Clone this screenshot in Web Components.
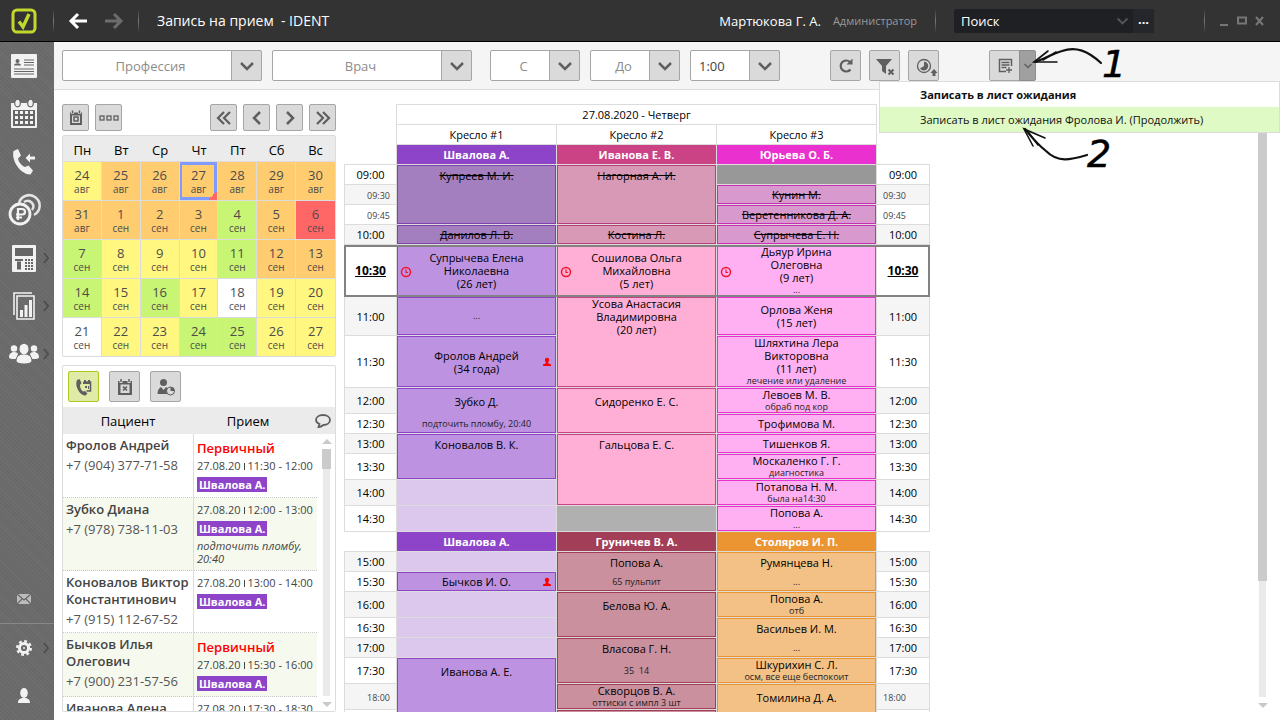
<!DOCTYPE html>
<html lang="ru">
<head>
<meta charset="utf-8">
<title>Запись на прием - IDENT</title>
<style>
  html, body { margin: 0; height: 100%; }
  body { font-family: "Open Sans", "Noto Sans", sans-serif; font-size: 12px; color: #000; background: #fff; overflow: hidden; }
</style>
</head>
<body>
<ident-app></ident-app>

<script>
const ICONS = {
  logo: [26, 26, '<rect x="2" y="2" width="22" height="22" rx="4" fill="none" stroke="#c3d82c" stroke-width="3"/><path d="M8 13.5l4 5.5 6-13" fill="none" stroke="#c3d82c" stroke-width="3.4"/>'],
  back: [20, 18, '<path d="M19 9H3M10 2L3 9l7 7" fill="none" stroke="#fff" stroke-width="3"/>'],
  forward: [20, 18, '<path d="M1 9h16M10 2l7 7-7 7" fill="none" stroke="#6c6c6c" stroke-width="3"/>'],
  minimize: [12, 12, '<path d="M2 10h8" stroke="#777" stroke-width="2"/>'],
  maximize: [12, 12, '<rect x="2" y="2.500" width="8" height="6" fill="none" stroke="#777" stroke-width="2"/>'],
  close: [12, 12, '<path d="M2 2l7 8M9 2l-7 8" stroke="#777" stroke-width="2"/>'],
  chevron: [16, 10, '<path d="M2 2l6 6 6-6" fill="none" stroke="currentColor" stroke-width="2.500"/>'],
  smallChevron: [10, 8, '<path d="M1.500 2L5 5.500 8.500 2" fill="none" stroke="currentColor" stroke-width="1.500"/>'],
  refresh: [18, 18, '<path d="M13.500 12.500A5.500 5.500 0 1 1 13 5" fill="none" stroke="#5f5f5f" stroke-width="2.200"/><path d="M15.500 1.500v6h-6z" fill="#5f5f5f"/>'],
  filter: [22, 22, '<path d="M2 4h16l-6 7v8l-4-3v-5z" fill="#5f5f5f"/><path d="M14.500 14.500l5 5M19.500 14.500l-5 5" stroke="#5f5f5f" stroke-width="2"/>'],
  clockUp: [28, 26, '<circle cx="14" cy="13" r="6.500" fill="none" stroke="#5f5f5f" stroke-width="1.300"/><path d="M14 8.500a4.500 4.500 0 1 1-4 7l4-2.500z" fill="#5f5f5f"/><path d="M24 16l3.500 4H25.500v3h-3v-3H20.500z" fill="#5f5f5f"/>'],
  listAdd: [16, 16, '<path d="M14.500 8V1.500h-12v12H9" fill="none" stroke="#5f5f5f" stroke-width="1.500"/><path d="M4.500 4.500h8M4.500 7h8M4.500 9.500h5M12 9v6M9 12h6" stroke="#5f5f5f" stroke-width="1.300"/>'],
  today: [16, 16, '<path d="M2 2.500h12V15H2z" fill="#5f5f5f"/><path d="M4 5.500h8V13H4z" fill="#dadada"/><rect x="6" y="7" width="4" height="4" fill="none" stroke="#5f5f5f" stroke-width="1.500"/><path d="M4.500 0v4M11.500 0v4" stroke="#dadada" stroke-width="3"/><path d="M4.500 0.500v3M11.500 0.500v3" stroke="#5f5f5f" stroke-width="1.500"/>'],
  dots: [20, 6, '<g fill="none" stroke="#5f5f5f" stroke-width="1.300"><rect x="1" y="1" width="4" height="4"/><rect x="8" y="1" width="4" height="4"/><rect x="15" y="1" width="4" height="4"/></g>'],
  prev: [10, 14, '<path d="M8 1L2 7l6 6" fill="none" stroke="#5f5f5f" stroke-width="2.500"/>'],
  next: [10, 14, '<path d="M2 1l6 6-6 6" fill="none" stroke="#5f5f5f" stroke-width="2.500"/>'],
  first: [16, 14, '<path d="M8 1L2 7l6 6M14 1L8 7l6 6" fill="none" stroke="#5f5f5f" stroke-width="2.200"/>'],
  last: [16, 14, '<path d="M2 1l6 6-6 6M8 1l6 6-6 6" fill="none" stroke="#5f5f5f" stroke-width="2.200"/>'],
  phoneCal: [18, 18, '<path d="M2 2l2.500-1 2 4-1.500 2c0 3 1 5 3 6.500l2-.5 2.500 2.500-2 2C6 18-1 9 2 2z" fill="#5f5f5f"/><path d="M8.500 4h7v9h-4" fill="none" stroke="#5f5f5f" stroke-width="1.600"/><path d="M9 2h2v2H9zM13 2h2v2h-2zM8 4h8v2H8zM10 8h2v2h-2zM13 8h1v3h-1z" fill="#5f5f5f"/>'],
  calX: [18, 18, '<path d="M2 3h14v14H2z" fill="#5f5f5f"/><path d="M4.500 6.500h9V15h-9z" fill="#dadada"/><path d="M7 8.500l4 4M11 8.500l-4 4" stroke="#5f5f5f" stroke-width="1.700"/><path d="M5 1v4M13 1v4" stroke="#dadada" stroke-width="3"/><path d="M5 1v3M13 1v3" stroke="#5f5f5f" stroke-width="1.500"/>'],
  userClock: [20, 18, '<circle cx="7.500" cy="4.500" r="3.500" fill="#5f5f5f"/><path d="M1.500 16c0-4 1.500-6 3.500-7l2.500 3L10 9c2 1 2 3 2 7z" fill="#5f5f5f"/><circle cx="14.500" cy="13" r="4" fill="#dadada" stroke="#5f5f5f"/><path d="M14.500 9v4h4a4 4 0 0 0-4-4z" fill="#5f5f5f"/>'],
  bubble: [18, 16, '<path d="M9 2c4 0 7 2 7 5s-3 5-6.500 5c-2 1.500-3 2-5 2l1-3C3 10 2 9 2 7c0-3 3-5 7-5z" fill="none" stroke="#5f5f5f" stroke-width="1.800"/>'],
  card: [30, 28, '<rect x="2" y="2" width="26" height="24" rx="1" fill="#f2f2f2"/><circle cx="8.500" cy="9" r="2" fill="#666"/><path d="M5 13.500c0-3 7-3 7 0z" fill="#666"/><path d="M15 8h10M15 10.500h10M15 13h10M5 17h20M5 19.500h20M5 22h20" stroke="#666" stroke-width="1.200"/>'],
  calendar: [30, 32, '<path d="M2 5h26v24a1 1 0 0 1-1 1H3a1 1 0 0 1-1-1z" fill="#f2f2f2"/><path d="M4 12h22v16H4z" fill="#666"/><g fill="#f2f2f2"><path d="M6 13h3v3H6zM11 13h3v3h-3zM16 13h3v3h-3zM21 13h3v3h-3zM6 18h3v3H6zM11 18h3v3h-3zM16 18h3v3h-3zM21 18h3v3h-3zM6 23h3v3H6zM11 23h3v3h-3zM16 23h3v3h-3zM21 23h3v3h-3z"/></g><g fill="#f2f2f2" stroke="#666" stroke-width="1.200"><ellipse cx="8.500" cy="5" rx="2.800" ry="3.800"/><ellipse cx="21.500" cy="5" rx="2.800" ry="3.800"/></g>'],
  call: [28, 28, '<path d="M3.500 3l4.500-2 3 6.500-3 3c.5 3.500 4 7.500 7 8.500l3.500-1.500 4.500 5-2.500 4C12 27 1 14 3.500 3z" fill="#f2f2f2"/><path d="M25 8.500h-5V5.500L15.500 10l4.500 4.500v-3h5z" fill="#f2f2f2"/>'],
  money: [34, 34, '<g fill="none" stroke="#e4e4e4" stroke-width="2.500"><path d="M12 10A10.500 10.500 0 1 1 27 22"/><path d="M17 9c6-4 12 3 8 8"/></g><circle cx="13" cy="21" r="10" fill="#6c6c6c" stroke="#f2f2f2" stroke-width="2.800"/><path d="M11 27V16h4c4 0 4 5.500 0 5.500H9M9 24.500h6" fill="none" stroke="#f2f2f2" stroke-width="2.200"/>'],
  terminal: [28, 30, '<rect x="2" y="2" width="24" height="27" rx="1" fill="#f2f2f2"/><path d="M5 5h18v8H5z" fill="#666"/><path d="M5 16h8v2H5zM7 18.500h4v8H7z" fill="#666"/><path d="M15 16h2v2h-2zM18 16h2v2h-2zM21 16h2v2h-2zM15 19h2v2h-2zM18 19h2v2h-2zM21 19h2v2h-2zM15 22h2v2h-2zM18 22h2v2h-2zM21 22h2v2h-2zM15 25h2v2h-2zM18 25h2v2h-2zM21 25h2v2h-2z" fill="#666"/>'],
  report: [26, 30, '<path d="M3 24V2h18M6 5h17v23H6z" fill="none" stroke="#f2f2f2" stroke-width="1.600"/><path d="M9 19h3v7H9zM13.500 14h3v12h-3zM18 9h3v17h-3z" fill="#f2f2f2"/>'],
  people: [32, 22, '<g fill="#f2f2f2"><circle cx="6" cy="5.500" r="3.200"/><path d="M1 14c0-6 8-6 9-3l-2 5c-4 0-7 0-7-2z"/><circle cx="26" cy="5.500" r="3.200"/><path d="M31 14c0-6-8-6-9-3l2 5c4 0 7 0 7-2z"/></g><path d="M8 18c0-6 5-7 8-7s8 1 8 7c0 4-16 4-16 0z" fill="#f2f2f2" stroke="#6c6c6c"/><ellipse cx="16" cy="6" rx="4.500" ry="5.200" fill="#f2f2f2"/>'],
  mail: [16, 12, '<path d="M1 1h14v10H1z" fill="#bcbcbc"/><path d="M1 1l7 6 7-6M1 11l5-5M15 11l-5-5" fill="none" stroke="#666" stroke-width="1.200"/>'],
  gear: [18, 18, '<circle cx="9" cy="9" r="4.600" fill="none" stroke="#f2f2f2" stroke-width="3"/><circle cx="9" cy="9" r="6.800" fill="none" stroke="#f2f2f2" stroke-width="2.400" stroke-dasharray="2.800 2.540"/><circle cx="9" cy="9" r="1" fill="#f2f2f2"/>'],
  person: [16, 18, '<ellipse cx="8" cy="6" rx="3.800" ry="5" fill="#f2f2f2"/><path d="M2 16c0-4 2-4 4-5h4c2 1 4 1 4 5z" fill="#f2f2f2"/>'],
  arrowRight: [8, 14, '<path d="M2 2l4 5-4 5" fill="none" stroke="#4f4f4f" stroke-width="2"/>'],
  late: [12, 12, '<circle cx="6" cy="6" r="4.500" fill="none" stroke="#f5142c" stroke-width="1.500"/><path d="M6 3.500V6.500h2" fill="none" stroke="#f5142c" stroke-width="1.200"/>'],
  primary: [10, 10, '<circle cx="5" cy="3" r="2.200" fill="#f00"/><path d="M1 9V7.500l2.500-1L4 5h2l.5 1.500 2.500 1V9z" fill="#f00"/>'],
  up: [10, 6, '<path d="M0 6l5-5 5 5z" fill="#c9c9c9"/>'],
  down: [10, 6, '<path d="M0 0l5 5 5-5z" fill="#c9c9c9"/>']
};
const icon = name => {
  const [w, h, body] = ICONS[name];
  return `<svg width="${w}" height="${h}" viewBox="0 0 ${w} ${h}" aria-hidden="true">${body}</svg>`;
};

class View extends HTMLElement {
  connectedCallback() {
    if (this.shadowRoot) return;
    this.attachShadow({ mode: 'open' }).innerHTML =
      `<style>*{box-sizing:border-box} :host([hidden]){display:none} svg{display:block} button,select,input{font:inherit;margin:0}${this.styles()}</style>${this.markup()}`;
  }
  styles() { return ''; }
  markup() { return ''; }
}
const define = (name, cls) => customElements.define(name, cls);

define('tool-button', class extends View {
  styles() {
    return `:host{display:block;flex:none;width:31px;height:31px}
      :host([small]){width:27px;height:27px}
      button{display:flex;align-items:center;justify-content:center;width:100%;height:100%;padding:0;border:1px solid #a6a6a6;border-radius:2px;background:#dadada}
      :host([active]) button{background:#dfeba6;border-color:#a9ca1e}`;
  }
  markup() { return `<button type="button" aria-label="${this.getAttribute('label')}">${icon(this.getAttribute('icon'))}</button>`; }
});

define('combo-box', class extends View {
  styles() {
    return `:host{display:grid;flex:0 0 auto;grid-template-columns:1fr 31px;height:31px;width:200px}
      :host([narrow]){width:90px}
      select{grid-area:1/1/2/3;appearance:none;border:1px solid #a6a6a6;border-radius:2px;background:#fff;color:#8c8c8c;font-size:13px;padding:0 31px 0 8px;text-align-last:center}
      :host([filled]) select{color:#444;text-align-last:left}
      span{grid-area:1/2;display:flex;align-items:center;justify-content:center;border:1px solid #a6a6a6;border-radius:0 2px 2px 0;background:#dadada;color:#5f5f5f;pointer-events:none}`;
  }
  markup() {
    const t = this.getAttribute('value');
    return `<select aria-label="${this.getAttribute('label') || t}"><option>${t}</option></select><span>${icon('chevron')}</span>`;
  }
});

define('scroll-bar', class extends View {
  styles() {
    return `:host{display:flex;flex-direction:column;align-items:center;flex:none;width:9px;padding:4px 0 3px}
      svg{flex:none}
      .track{flex:1;width:7px;margin:5px 0 6px;background:#eaeaea;display:flex;justify-content:center}
      .thumb{flex:none;width:9px;height:var(--thumb);background:#cbcbcb}`;
  }
  markup() { return `${icon('up')}<div class="track"><div class="thumb"></div></div>${icon('down')}`; }
});

define('top-bar', class extends View {
  styles() {
    return `:host{display:flex;align-items:center;flex:none;height:42px;background:#333;border-bottom:1px solid #000;color:#fff;font-size:13px}
      .logo{width:53px;padding-left:11px}
      i{flex:none;width:1px;height:24px;background:linear-gradient(#333,#777,#333)}
      button{display:flex;align-items:center;justify-content:center;padding:0;border:0;background:none;color:inherit}
      .nav{width:36px}.nav:first-of-type{margin-left:6px}.nav+i{margin-left:6px}
      h1{margin:0 auto 0 18px;font-weight:400;font-size:14px;white-space:pre}
      .role{margin:0 18px 0 12px;font-size:11px;color:#999}
      form{display:flex;align-items:center;width:200px;height:24px;margin:0 50px 0 18px;background:#1f2024;border-radius:2px;color:#555}
      form>svg{width:13px}
      input{flex:1;min-width:0;border:0;background:none;color:#fff;padding:0 0 0 7px;outline:0}
      input::placeholder{color:#fff;opacity:1}
      .more{width:21px;height:24px;margin-left:4px;background:#25262b;color:#fff;font-weight:700;padding-bottom:3px}
      .win{width:18px}.win:last-child{margin-right:11px}.sep2+.win{margin-left:10px}`;
  }
  markup() {
    return `<div class="logo">${icon('logo')}</div><i></i>
      <button class="nav" aria-label="Назад">${icon('back')}</button><button class="nav" aria-label="Вперед">${icon('forward')}</button><i></i>
      <h1>Запись на прием  - IDENT</h1>
      <span>Мартюкова Г. А.</span><span class="role">Администратор</span><i></i>
      <form><input type="text" placeholder="Поиск" aria-label="Поиск">${icon('chevron')}<button type="button" class="more">...</button></form>
      <i class="sep2"></i>
      <button class="win" aria-label="Свернуть">${icon('minimize')}</button><button class="win" aria-label="Развернуть">${icon('maximize')}</button><button class="win" aria-label="Закрыть">${icon('close')}</button>`;
  }
});

define('side-nav', class extends View {
  styles() {
    return `:host{display:flex;flex-direction:column;flex:none;width:54px;background:repeating-linear-gradient(45deg,#696969 0 2px,#6f6f6f 2px 3px)}
      a{display:grid;grid-template-columns:36px 8px;align-items:center;height:48px;padding-left:6px;flex:0 1 auto}
      a>svg{justify-self:center}
      .mail{margin-top:auto}
      hr{width:100%;margin:0;border:0;border-top:1px solid #888}`;
  }
  markup() {
    const a = (n, label, more, cls = '') => `<a href="#${n}" class="${cls}" aria-label="${label}">${icon(n)}${more ? icon('arrowRight') : ''}</a>`;
    return a('card', 'Пациенты') + a('calendar', 'Расписание') + a('call', 'Звонки') + a('money', 'Финансы') + a('terminal', 'Касса', 1) +
      a('report', 'Отчеты', 1) + a('people', 'Сотрудники', 1) + a('mail', 'Почта', 0, 'mail') + '<hr>' + a('gear', 'Настройки', 1) + a('person', 'Профиль');
  }
});

define('action-menu', class extends View {
  styles() {
    return `:host{display:block;width:401px;background:#fff;border:1px solid #dcdcdc}
      button{display:block;width:100%;height:25px;padding:0 0 0 40px;border:0;background:none;text-align:left;font-size:11px;color:#111}
      button:first-of-type{font-weight:700}
      button:last-of-type{background:#dffac4}`;
  }
  markup() { return `<button type="button">Записать в лист ожидания</button><button type="button">Записать в лист ожидания Фролова И. (Продолжить)</button>`; }
});

define('tool-bar', class extends View {
  styles() {
    return `:host{position:relative;z-index:2;display:flex;flex:none;height:48px;padding:8px 8px 0;background:#f5f5f5;border-bottom:1px solid #dcdcdc;gap:10px}
      .group{display:flex;gap:10px}.group+.group{margin-left:8px}
      .buttons{display:flex;gap:8px;margin-left:40px}
      .split{display:flex;margin-left:40px;height:31px}
      .split button{display:flex;align-items:center;justify-content:center;padding:0;border:1px solid #a6a6a6;background:#dadada;width:31px;border-radius:2px 0 0 2px}
      .split .drop{width:17px;margin-left:-1px;background:#a0a0a0;border-color:#8c8c8c;color:#5f5f5f;border-radius:0 2px 2px 0}
      action-menu{position:absolute;right:0;top:39px}
      .note{position:absolute;right:100px;top:0;pointer-events:none}`;
  }
  markup() {
    return `<div class="group"><combo-box value="Профессия"></combo-box><combo-box value="Врач"></combo-box></div>
      <div class="group"><combo-box narrow value="С"></combo-box><combo-box narrow value="До"></combo-box><combo-box narrow filled value="1:00" label="Длительность"></combo-box></div>
      <div class="buttons"><tool-button icon="refresh" label="Обновить"></tool-button><tool-button icon="filter" label="Сбросить фильтр"></tool-button><tool-button icon="clockUp" label="Ближайшее время"></tool-button></div>
      <div class="split"><button type="button" aria-label="Лист ожидания">${icon('listAdd')}</button><button type="button" class="drop" aria-label="Еще">${icon('smallChevron')}</button></div>
      <action-menu></action-menu>
      <svg class="note" width="180" height="150" viewBox="1000 42 180 150">
        <g fill="none" stroke="#111" stroke-linecap="round">
          <path d="M1101 63C1088 51 1076 46 1062 51C1052 54 1044 59 1035 62" stroke-width="2.200"/>
          <path d="M1048 51L1034 62L1057 62M1043 60l13-8" stroke-width="1.600"/>
          <path d="M1087 155C1070 160 1058 163 1046 151C1036 143 1030 135 1025 129" stroke-width="2.200"/>
          <path d="M1033 146L1024 129L1045 138M1029 133l9 12" stroke-width="1.600"/>
        </g>
        <g font-family="DejaVu Sans" font-style="oblique" font-size="38" fill="#000" stroke="#000" stroke-width="0.500"><text x="1102" y="77">1</text><text x="1087" y="167">2</text></g>
      </svg>`;
  }
});

define('month-calendar', class extends View {
  styles() {
    return `:host{display:block}
      nav{display:flex;gap:6px;margin-bottom:4px}
      nav tool-button:nth-child(3){margin-left:auto}
      table{width:100%;table-layout:fixed;border-collapse:separate;border-spacing:0;border:1px solid #dcdcdc;border-radius:2px;text-align:center}
      th{height:26px;padding:3px 0 0;background:#ebebeb;font-weight:400;font-size:13px;border-bottom:1px solid #dcdcdc}
      td{height:39px;padding:2px 0 0;border:solid #dcdcdc;border-width:0 1px 1px 0;color:#4c4c4c;font-size:13px;line-height:15px}
      td:last-child{border-right:0} tr:last-child td{border-bottom:0;height:38px}
      small{display:block;font-size:10px;line-height:13px}
      .o{background:#ffcc70}.y{background:#fff780}.g{background:#c8f573}.r{background:#ff6666}
      .sel{background:linear-gradient(135deg,transparent 50%,#ff6666 50%) right bottom/9px 9px no-repeat,linear-gradient(#ffcc70,#ffcc70) center/32px 32px no-repeat,#7f9bff}`;
  }
  markup() {
    const days = ['24y', '25o', '26o', '27s', '28o', '29o', '30o', '31o', '1o', '2o', '3o', '4g', '5o', '6r', '7g', '8y', '9y', '10y', '11g', '12o', '13o', '14g', '15y', '16g', '17y', '18w', '19y', '20y', '21w', '22y', '23y', '24g', '25g', '26y', '27y'];
    let rows = '';
    days.forEach((d, i) => {
      const c = d.slice(-1);
      rows += `${i % 7 ? '' : '<tr>'}<td class="${c === 's' ? 'sel' : c}">${d.slice(0, -1)}<small>${i < 8 ? 'авг' : 'сен'}</small></td>${i % 7 === 6 ? '</tr>' : ''}`;
    });
    const b = (n, l) => `<tool-button small icon="${n}" label="${l}"></tool-button>`;
    return `<nav>${b('today', 'Сегодня')}${b('dots', 'Еще')}${b('first', 'Месяц назад')}${b('prev', 'Неделя назад')}${b('next', 'Неделя вперед')}${b('last', 'Месяц вперед')}</nav>
      <table><thead><tr>${['Пн', 'Вт', 'Ср', 'Чт', 'Пт', 'Сб', 'Вс'].map(x => `<th>${x}</th>`).join('')}</tr></thead><tbody>${rows}</tbody></table>`;
  }
});

define('patient-list', class extends View {
  styles() {
    return `:host{display:flex;flex-direction:column;min-height:0;border:1px solid #dcdcdc;border-radius:2px;overflow:hidden}
      nav{display:flex;flex:none;gap:10px;padding:5px}
      .body{display:flex;flex:1;min-height:0}
      .head{display:flex;flex:none;align-items:center;height:27px;background:#ebebeb;font-size:13px;text-align:center}
      .head span{width:130px}.head span+span{width:110px}.head svg{margin-left:auto;margin-right:3px}
      .scroll{flex:1;overflow:hidden}
      table{width:100%;border-collapse:separate;border-spacing:0;table-layout:fixed;color:#444}
      td{vertical-align:top;padding:3px 2px 5px 3px;border-bottom:1px dotted #c8c8c8}
      td:first-child{width:131px;padding-bottom:4px;border-right:1px solid #dcdcdc}
      tr:nth-child(even){background:#f6faee}
      b{display:block;font-weight:600;font-size:13px;line-height:17px}
      .tel{font-size:13px;line-height:17px;margin-top:3px;color:#555}
      .first{font-weight:600;font-size:13px;line-height:18px;color:#f00;padding-top:2px}
      .date{font-size:11px;line-height:18px;white-space:nowrap}
      .date i{display:inline-block;width:1px;height:7px;margin:0 3px;background:#444}
      .doc{display:table;margin-top:2px;padding:0 2px;background:#8e44c9;color:#fff;font-weight:700;font-size:11px;line-height:15px}
      em{display:block;font-size:11px;line-height:13px;margin-top:3px}
      scroll-bar{margin:0 4px 0 5px;--thumb:8%}`;
  }
  markup() {
    const list = [
      ['Фролов Андрей', '+7 (904) 377-71-58', '11:30 - 12:00', 1],
      ['Зубко Диана', '+7 (978) 738-11-03', '12:00 - 13:00', 0, 'подточить пломбу, 20:40'],
      ['Коновалов Виктор Константинович', '+7 (915) 112-67-52', '13:00 - 14:00', 0],
      ['Бычков Илья Олегович', '+7 (900) 231-57-56', '15:30 - 16:00', 1],
      ['Иванова Алена', '', '17:30 - 18:30', 0]
    ];
    return `<nav><tool-button active icon="phoneCal" label="Обзвон"></tool-button><tool-button icon="calX" label="Отмены"></tool-button><tool-button icon="userClock" label="Ожидание"></tool-button></nav>
      <div class="head"><span>Пациент</span><span>Прием</span>${icon('bubble')}</div>
      <div class="body"><div class="scroll"><table>${list.map(p => `<tr><td><b>${p[0]}</b>${p[1] ? `<div class="tel">${p[1]}</div>` : ''}</td><td>${p[3] ? '<div class="first">Первичный</div>' : ''}<div class="date">27.08.20<i></i>${p[2]}</div>${p[1] ? '<span class="doc">Швалова А.</span>' : ''}${p[4] ? `<em>${p[4]}</em>` : ''}</td></tr>`).join('')}</table></div>
      <scroll-bar></scroll-bar></div>`;
  }
});

define('visit-card', class extends View {
  styles() {
    return `:host{position:relative;display:flex;flex-direction:column;justify-content:center;height:100%;overflow:hidden;text-align:center}
      :host([tall]){justify-content:flex-start}
      .name{font-size:11px;line-height:13px;white-space:pre-line}
      :host([tall]) .name,:host([tall]) .note{flex:none;display:flex;align-items:center;justify-content:center}
      :host([tall]) .name{min-height:var(--first)}
      :host([tall]) .note{height:calc(var(--second) - 1px)}
      .note{font-size:9px;line-height:12px;color:#222;white-space:pre}
      :host([cancelled]) .name{text-decoration:line-through}
      .mark{position:absolute;top:calc(50% - 5px)}
      .late{left:3px}.primary{right:4px}`;
  }
  markup() {
    const n = this.getAttribute('note'), m = this.getAttribute('mark');
    return `<div class="name"><slot></slot></div>${n ? `<div class="note">${n}</div>` : ''}${m ? `<span class="mark ${m}">${icon(m)}</span>` : ''}`;
  }
});

define('schedule-grid', class extends View {
  styles() {
    return `:host{display:block;overflow:hidden}
      table{width:586px;table-layout:fixed;border-collapse:separate;border-spacing:0;text-align:center;font-size:11px;line-height:15px}
      col.t{width:53px}
      th,td{padding:0;border:solid #dcdcdc;border-width:0 1px 1px 0;font-weight:400}
      .corner{border-left:0}.end{border-right:0}
      .date{border-top-width:1px}
      .doc{color:#fff;font-weight:700}
      .time:first-child{border-left-width:1px}
      .alt .time{background:#f5f5f5}
      .time.minor{font-size:9px;color:#444;text-align:right;padding:2px 6px 0}
      .time.minor:last-child{text-align:left}
      .now{outline:2px solid #828282;outline-offset:-2px}
      .now .time{font-size:12px;font-weight:700;text-decoration:underline}
      .box{height:1px;background:var(--bg);box-shadow:inset 0 0 0 1px var(--line)}
      .v{--bg:#bd92e0;--line:#8e44c9}.vx{--bg:#a37fbf;--line:#7f41ae}.ve{background:#dcc7ed}
      .p{--bg:#ffaed5;--line:#cb4385}.px{--bg:#d899b7;--line:#b83f7a}
      .m{--bg:#ffb0f3;--line:#ea30cf}.mx{--bg:#d799ce;--line:#c92fb3}
      .w{--bg:#cb909e;--line:#a23e57}.o{--bg:#f3c085;--line:#eb9532}
      .g1{background:#989898}.g2{background:#b0b0b0}`;
  }
  markup() {
    const E = c => ({ cls: c });
    const V = (cls, name, span = 1, note = '', mark = '') => ({ cls, name, span, note, mark });
    const doctors = (...d) => ({ doctors: d });
    const rows = [
      doctors(['Швалова А.', '#8e44c9'], ['Иванова Е. В.', '#cb4385'], ['Юрьева О. Б.', '#ea30cf']),
      ['09:00', 20, V('vx', 'Купреев М. И.', 3), V('px', 'Нагорная А. И.', 3), E('g1')],
      ['09:30', 20, V('mx', 'Кунин М.')],
      ['09:45', 20, V('mx', 'Веретенникова Д. А.')],
      ['10:00', 20, V('vx', 'Данилов Л. В.'), V('px', 'Костина Л.'), V('mx', 'Супрычева Е. Н.')],
      ['10:30', 52, V('v', 'Супрычева Елена\nНиколаевна\n(26 лет)', 1, '', 'late'), V('p', 'Сошилова Ольга\nМихайловна\n(5 лет)', 1, '', 'late'), V('m', 'Дьяур Ирина\nОлеговна\n(9 лет)', 1, '...', 'late')],
      ['11:00', 39, V('v', '', 1, '...'), V('p', 'Усова Анастасия\nВладимировна\n(20 лет)', 2), V('m', 'Орлова Женя\n(15 лет)')],
      ['11:30', 52, V('v', 'Фролов Андрей\n(34 года)', 1, '', 'primary'), V('m', 'Шляхтина Лера\nВикторовна\n(11 лет)', 1, 'лечение или удаление')],
      ['12:00', 26, V('v', 'Зубко Д.', 2, 'подточить пломбу, 20:40'), V('p', 'Сидоренко Е. С.', 2), V('m', 'Левоев М. В.', 1, 'обраб под кор')],
      ['12:30', 20, V('m', 'Трофимова М.')],
      ['13:00', 20, V('v', 'Коновалов В. К.', 2), V('p', 'Гальцова Е. С.', 3), V('m', 'Тишенков Я.')],
      ['13:30', 26, V('m', 'Москаленко Г. Г.', 1, 'диагностика')],
      ['14:00', 26, E('ve'), V('m', 'Потапова Н. М.', 1, 'была на14:30')],
      ['14:30', 26, E('ve'), E('g2'), V('m', 'Попова А.', 1, '...')],
      doctors(['Швалова А.', '#8e44c9'], ['Груничев В. А.', '#a23e57'], ['Столяров И. П.', '#eb9532']),
      ['15:00', 20, E('ve'), V('w', 'Попова А.', 2, '65 пульпит'), V('o', 'Румянцева Н.', 2, '...')],
      ['15:30', 20, V('v', 'Бычков И. О.', 1, '', 'primary')],
      ['16:00', 26, E('ve'), V('w', 'Белова Ю. А.', 2), V('o', 'Попова А.', 1, 'отб')],
      ['16:30', 20, E('ve'), V('o', 'Васильев И. М.', 2, '...')],
      ['17:00', 20, E('ve'), V('w', 'Власова Г. Н.', 2, '35  14')],
      ['17:30', 26, V('v', 'Иванова А. Е.', 3), V('o', 'Шкурихин С. Л.', 1, 'осм, все еще беспокоит')],
      ['18:00', 26, V('w', 'Скворцов В. А.', 1, 'оттиски с импл 3 шт'), V('o', 'Томилина Д. А.', 2)],
      ['18:30', 26, V('w', '')]
    ];
    const minor = ['09:30', '09:45', '18:00'];
    let n = 0;
    const body = rows.map((r, i) => {
      if (r.doctors) {
        const side = c => i ? `<th class="${c}"></th>` : '';
        return `<tr style="height:20px">${side('corner')}${r.doctors.map(d => `<th class="doc" style="background:${d[1]}">${d[0]}</th>`).join('')}${side('corner end')}</tr>`;
      }
      const [time, h, ...cells] = r;
      const next = rows[i + 1] ? rows[i + 1][1] : h;
      const t = `<td class="time${minor.includes(time) ? ' minor' : ''}">${i < rows.length - 1 ? time : ''}</td>`;
      const cls = `${n++ % 2 ? 'alt' : ''}${time === '10:30' ? ' now' : ''}`;
      return `<tr class="${cls}" style="height:${h}px">${t}${cells.map(c => {
        if (c.name === undefined) return `<td class="${c.cls}"></td>`;
        const tall = c.span > 1;
        return `<td class="box ${c.cls}" rowspan="${c.span}"><visit-card${tall ? ' tall' : ''}${/x$/.test(c.cls) ? ' cancelled' : ''} note="${c.note}" mark="${c.mark}" style="--first:${h}px;--second:${next}px">${c.name}</visit-card></td>`;
      }).join('')}${t}</tr>`;
    }).join('');
    const split = body.indexOf('</tr>') + 5;
    return `<table><colgroup><col class="t"><col><col><col><col class="t"></colgroup>
      <thead><tr style="height:21px"><th class="corner" rowspan="3"></th><th class="date" colspan="3">27.08.2020 - Четверг</th><th class="corner end" rowspan="3"></th></tr>
      <tr style="height:20px"><th>Кресло #1</th><th>Кресло #2</th><th>Кресло #3</th></tr>${body.slice(0, split)}</thead><tbody>${body.slice(split)}</tbody></table>`;
  }
});

define('ident-app', class extends View {
  styles() {
    return `:host{display:flex;flex-direction:column;height:100vh}
      .shell{display:flex;flex:1;min-height:0}
      .page{display:flex;flex-direction:column;flex:1;min-width:0}
      main{display:flex;flex:1;min-height:0;gap:8px;padding:14px 13px 8px 8px}
      aside{display:flex;flex-direction:column;flex:none;width:274px;gap:8px}
      month-calendar{flex:none}
      patient-list{flex:1}
      schedule-grid{flex:1}
      main>scroll-bar{--thumb:80%}`;
  }
  markup() {
    return `<top-bar></top-bar><div class="shell"><side-nav></side-nav><div class="page"><tool-bar></tool-bar>
      <main><aside><month-calendar></month-calendar><patient-list></patient-list></aside><schedule-grid></schedule-grid><scroll-bar></scroll-bar></main></div></div>`;
  }
});
</script>
</body>
</html>
